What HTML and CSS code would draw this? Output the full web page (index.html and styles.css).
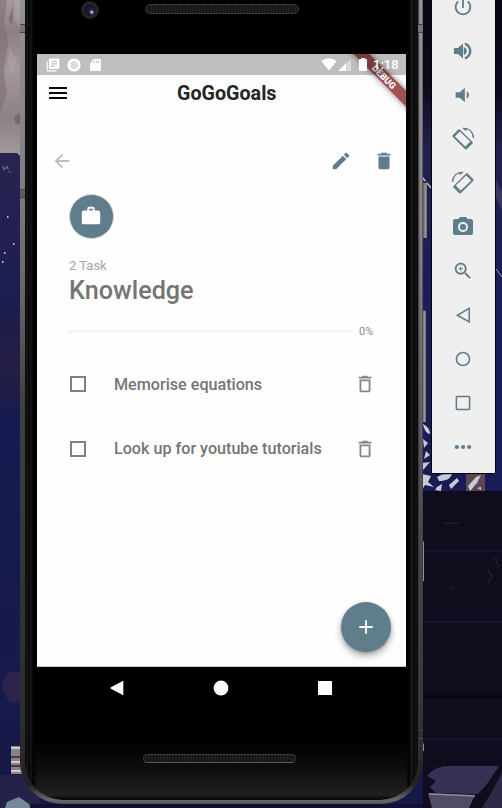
FILE: index.html
```html
<!DOCTYPE html>
<html lang="en">
<head>
<meta charset="utf-8">
<title>GoGoGoals</title>
<link rel="stylesheet" href="styles.css">
</head>
<body>
<svg class="wallpaper" viewBox="0 0 502 808" aria-hidden="true">
  <defs>
    <linearGradient id="stone" x1="0" y1="0" x2="0" y2="1"><stop offset="0" stop-color="#a59b9c"/><stop offset=".2" stop-color="#8d7f83"/><stop offset=".45" stop-color="#a3989a"/><stop offset=".75" stop-color="#8c8286"/><stop offset="1" stop-color="#a39a9b"/></linearGradient>
    <linearGradient id="night" x1="0" y1="0" x2="0" y2="1"><stop offset="0" stop-color="#292451"/><stop offset=".25" stop-color="#1b1d50"/><stop offset=".36" stop-color="#231e43"/><stop offset=".45" stop-color="#161a50"/><stop offset="1" stop-color="#18194b"/></linearGradient>
    <linearGradient id="sky" x1="0" y1="0" x2="0" y2="1"><stop offset="0" stop-color="#080613"/><stop offset=".18" stop-color="#0c0a1e"/><stop offset=".3" stop-color="#22204e"/><stop offset=".6" stop-color="#1b1d5a"/><stop offset="1" stop-color="#181b55"/></linearGradient>
  </defs>
  <rect width="502" height="808" fill="#161848"/>
  <rect width="40" height="156" fill="url(#stone)"/>
  <path d="M0 0h7l-3 22 4 20-4 30 3 22-7 20z" fill="#806e75" opacity=".6"/>
  <path d="M14 0h6v28l-5-8zM9 48l8 12-4 14-5-10z" fill="#b5adab" opacity=".4"/>
  <path d="M20 113l-6 4 1 6 5 2zM13 5l-4 14 3 7z" fill="#625b62" opacity=".6"/>
  <path d="M0 153h17l3 3v594H0z" fill="url(#night)"/>
  <path d="M2 166l4 2-2 3zM7 165l2 5-3-2zM9 171l3 2-4-1z" fill="#6e6990"/>
  <path d="M7 216h1.500v2H7zM13 243h1.500v2H13zM4 252h1.500v2H4zM2 261h1.500v2H2z" fill="#b8b6c9"/>
  <path d="M20 672h-10q-7 5-8 13 2 13 9 17l9 1z" fill="#352a4e" opacity=".7"/>
  <path d="M0 775h40v33H0z" fill="#242248"/>
  <path d="M11 746h12v28H11z" fill="#8b8189"/>
  <path d="M11 748h12M11 762h12M11 771h12" stroke="#d4c9ca" stroke-width="2"/>
  <path d="M11 757h12M11 766h12" stroke="#49394c" stroke-width="2"/>
  <path d="M5 808l2-6 12-5 10 7 2 4z" fill="#75899a"/>
  <path d="M30 804h395v4H30z" fill="#111033"/>
  <path d="M422 0h80v492h-80z" fill="url(#sky)"/>
  <path d="M422 177l9 11" stroke="#bbb9c4" stroke-width="1.500"/>
  <path d="M496 180l6 12v18l-6-12z" fill="#3b365d"/>
  <path d="M496 269l6 8" stroke="#9b99ae"/>
  <path d="M466 474h19v17h-19z" fill="#5d4653"/>
  <g fill="#c9cbd3"><path d="M423 424c6 3 7 7 7 10-3 0-6-4-7-10zM423 439l5 4-4 5zM426 451l4 4-6 4zM422 463l8-1-7 8zM422 474l9 2-3 6 6 5-9-2-3 5zM437 477c6-4 12-2 15-3-2 5-6 7-13 7zM449 485l8-7 2 3-8 8zM468 486l8-9 5-2-4 8-7 8zM437 487l5-3-1 7-6-1zM477 488l4-1v3z"/></g>
  <path d="M423 491h79v317H423z" fill="#100c1d"/>
  <path d="M423 512h79M423 551h79M423 622h79M423 739h79" stroke="#17132a" stroke-width="1.500"/>
  <path d="M423 697h79" stroke="#08060e" stroke-width="3"/>
  <path d="M443 523h16" stroke="#29233a"/>
  <path d="M488 570l4 7-4 6M495 558l4 9M450 587l2 3" stroke="#1f1d20" stroke-width="2" fill="none"/>
  <path d="M427 776q8-10 22-10h50l-12 18-9 10-42-1-6-6 6-6z" fill="#373154"/>
  <path d="M491 793l11-20v35h-20z" fill="#2d2947"/>
  <path d="M428 793l47 2-6 13h-37z" fill="#514b66"/>
  <path d="M429 794l46 2" stroke="#908996" stroke-width="1.500"/>
</svg>

<div class="stage">
  <div class="phone">
    <i class="side-key power"></i><i class="side-key volume"></i><i class="side-key low"></i><i class="side-key tip"></i>
    <i class="band band-a"></i><i class="band band-b"></i><i class="band band-c"></i>
    <div class="body">
      <div class="forehead"><span class="camera"></span><span class="speaker"></span></div>
      <div class="screen">
        <div class="banner-clip"><div class="banner">DEBUG</div></div>
        <div class="status">
          <svg class="st news" viewBox="0 0 24 24"><path d="M1 6v15c0 1 1 2 2 2h15v-2H3V6zM7 1h14c1 0 2 1 2 2v14c0 1-1 2-2 2H7c-1 0-2-1-2-2V3c0-1 1-2 2-2zm2 4v2h10V5zm0 4v2h10V9zm0 4v2h6v-2z" fill-rule="evenodd"/></svg>
          <svg class="st ring" viewBox="0 0 14 14"><circle cx="7" cy="7" r="6.600"/><circle cx="7" cy="7" r="3.900" fill="#dcdcdc"/></svg>
          <svg class="st sd" viewBox="0 0 24 24"><path d="M20 1H9L2 9v12c0 1.100.9 2 2 2h16c1.100 0 2-.9 2-2V3c0-1.100-.9-2-2-2zM11 8H9V4h2zm4 0h-2V4h2zm4 0h-2V4h2z"/></svg>
          <svg class="st wifi" viewBox="0 0 16 13"><path d="M8 12.500L.2 3Q8-2.600 15.800 3z"/></svg>
          <svg class="st cell" viewBox="0 0 13 12"><path d="M13 0v12H0z" fill="#dadada"/><path d="M8 4.600V12H0z"/></svg>
          <svg class="st batt" viewBox="0 0 8 13"><path d="M2 1V0h4v1h1.200q.8 0 .8.800v10.400q0 .8-.8.800H.8q-.8 0-.8-.8V1.800Q0 1 .8 1z"/></svg>
          <span class="clock">1:18</span>
        </div>
        <header class="appbar">
          <span class="menu"><i></i><i></i><i></i></span>
          <h1>GoGoGoals</h1>
        </header>
        <div class="actions">
          <svg class="back" viewBox="0 0 24 24"><path d="M20 11H7.830l5.590-5.590L12 4l-8 8 8 8 1.410-1.410L7.830 13H20v-2z"/></svg>
          <svg class="edit" viewBox="0 0 24 24"><path d="M3 17.250V21h3.750L17.810 9.940l-3.750-3.750L3 17.250zM20.710 7.040c.39-.39.39-1.020 0-1.410l-2.340-2.340c-.39-.39-1.020-.39-1.410 0l-1.830 1.830 3.750 3.750 1.830-1.830z"/></svg>
          <svg class="del" viewBox="0 0 24 24"><path d="M6 19c0 1.100.9 2 2 2h8c1.100 0 2-.9 2-2V7H6v12zM19 4h-3.500l-1-1h-5l-1 1H5v2h14V4z"/></svg>
        </div>
        <main class="content">
          <div class="avatar"><svg viewBox="0 0 24 24"><path d="M20 6h-4V4c0-1.110-.89-2-2-2h-4c-1.110 0-2 .89-2 2v2H4c-1.110 0-1.990.89-1.990 2L2 19c0 1.110.89 2 2 2h16c1.110 0 2-.89 2-2V8c0-1.110-.89-2-2-2zm-6 0h-4V4h4v2z"/></svg></div>
          <div class="count">2 Task</div>
          <h2>Knowledge</h2>
          <div class="progress"><span class="track"></span><span class="pct">0%</span></div>
          <ul>
            <li><span class="box"></span><span class="task">Memorise equations</span><svg viewBox="0 0 24 24"><path d="M6 19c0 1.100.9 2 2 2h8c1.100 0 2-.9 2-2V7H6v12zM8 9h8v10H8V9zm7.500-5l-1-1h-5l-1 1H5v2h14V4z"/></svg></li>
            <li><span class="box"></span><span class="task">Look up for youtube tutorials</span><svg viewBox="0 0 24 24"><path d="M6 19c0 1.100.9 2 2 2h8c1.100 0 2-.9 2-2V7H6v12zM8 9h8v10H8V9zm7.500-5l-1-1h-5l-1 1H5v2h14V4z"/></svg></li>
          </ul>
        </main>
        <div class="fab"><svg viewBox="0 0 14 14"><path d="M7 .3v13.400M.3 7h13.400"/></svg></div>
      </div>
      <div class="navbar">
        <svg viewBox="0 0 16 16"><path d="M14.300 1.200v13.600q0 .6-.6.300L1.500 8.400q-.5-.4 0-.8L13.700.9q.6-.3.6.3z"/></svg>
        <svg viewBox="0 0 16 16"><circle cx="8" cy="8" r="7.400"/></svg>
        <svg viewBox="0 0 16 16"><rect x="1" y="1" width="14" height="14" rx=".6"/></svg>
      </div>
      <div class="chin"><span class="speaker"></span></div>
    </div>
  </div>

  <aside class="tools">
    <svg viewBox="0 0 24 24"><path d="M13 3h-2v10h2V3zm4.830 2.170l-1.420 1.420C17.990 7.860 19 9.810 19 12c0 3.870-3.130 7-7 7s-7-3.130-7-7c0-2.190 1.010-4.140 2.580-5.420L6.170 5.170C4.230 6.820 3 9.260 3 12c0 4.970 4.030 9 9 9s9-4.030 9-9c0-2.740-1.230-5.180-3.170-6.830z"/></svg>
    <svg viewBox="0 0 24 24"><path d="M2 8.800v6.400h4.500l5.500 5V3.800l-5.500 5H2zm10.800 3.200V7.500c2 .7 3.400 2.400 3.400 4.500s-1.400 3.800-3.400 4.500zM14 2.700v2.700c2.890.86 4.500 3.540 4.500 6.600s-1.610 5.740-4.500 6.600v2.700c4.010-.91 7.200-4.900 7.200-9.300S18.010 3.610 14 2.700z"/></svg>
    <svg viewBox="0 0 24 24"><path d="M18.500 12c0-1.770-1.020-3.290-2.500-4.030v8.050c1.480-.73 2.500-2.250 2.500-4.020zM4 9v6h4.500l5.500 5V4L8.500 9H4z"/></svg>
    <svg class="rot" viewBox="0 0 25 25"><g id="rot"><path fill-rule="evenodd" d="M7.700 2.500q.8-.8 1.600 0L22.400 15.500q.8.800 0 1.600l-6 6q-.8.800-1.600 0L1.700 10.100q-.8-.8 0-1.600zM9.200 4.600L4 9.800 14.900 20.400l5.200-5.200z"/><path d="M12.500 1.500C19 1 22.800 5.400 23.500 11.500" fill="none" stroke="#607d8b" stroke-width="1.500"/><path d="M12 .8l5.500 1-2.200 2.300z"/></g></svg>
    <svg class="rot flip" viewBox="0 0 25 25"><use href="#rot"/></svg>
    <svg class="cam" viewBox="0 0 24 24"><path fill-rule="evenodd" d="M9 2L7.170 4H4c-1.100 0-2 .9-2 2v12c0 1.100.9 2 2 2h16c1.100 0 2-.9 2-2V6c0-1.100-.9-2-2-2h-3.170L15 2H9zm3 15c-2.760 0-5-2.240-5-5s2.240-5 5-5 5 2.240 5 5-2.240 5-5 5z"/><circle cx="12" cy="12" r="3.100"/></svg>
    <svg viewBox="0 0 24 24"><path d="M15.500 14h-.79l-.28-.27C15.410 12.590 16 11.110 16 9.500 16 5.910 13.090 3 9.500 3S3 5.910 3 9.500 5.910 16 9.500 16c1.610 0 3.090-.59 4.230-1.570l.27.28v.79l5 4.990L20.490 19l-4.990-5zm-6 0C7.010 14 5 11.990 5 9.500S7.010 5 9.500 5 14 7.010 14 9.500 11.990 14 9.500 14zm.5-7H9v2H7v1h2v2h1v-2h2V9h-2V7z"/></svg>
    <svg class="line" viewBox="0 0 20 20"><path d="M15.700 4v12.400L4.800 10.200z"/></svg>
    <svg class="line" viewBox="0 0 20 20"><circle cx="10" cy="10" r="6"/></svg>
    <svg class="line" viewBox="0 0 20 20"><rect x="4" y="4" width="12" height="12" rx=".8"/></svg>
    <svg viewBox="0 0 20 20"><circle cx="4.400" cy="10" r="1.900"/><circle cx="10" cy="10" r="1.900"/><circle cx="15.600" cy="10" r="1.900"/></svg>
  </aside>
</div>
</body>
</html>
```
FILE: styles.css
```css
* { box-sizing: border-box; }
body {
  margin: 0;
  width: 502px;
  height: 808px;
  overflow: hidden;
  position: relative;
  font-family: Roboto, "Liberation Sans", sans-serif;
}
svg { display: block; flex: none; }
h1, h2, ul { margin: 0; padding: 0; }
.wallpaper { position: absolute; inset: 0; width: 502px; height: 808px; }
.stage {
  position: relative;
  display: flex;
  align-items: flex-start;
  gap: 8px;
  padding-left: 20px;
}

/* Device frame */
.phone {
  position: relative;
  width: 403px;
  height: 804px;
  padding: 0 5px 4px;
  border-radius: 0 0 42px 42px;
  background: linear-gradient(#929193 0, #858386 150px, #6a686c 280px, #414143 400px, #353537 560px, #2c2c2c 740px, #222 785px, #68686b 800px, #555 804px);
}
.phone::after {
  content: "";
  position: absolute;
  top: 0;
  right: 0;
  width: 5px;
  height: 760px;
  background: linear-gradient(90deg, #38383a 0, transparent 2px, transparent 4px, #333), linear-gradient(#98959a 0, #858086 240px, #67646a 400px, #49494d 540px, #38383a 700px, #29292b);
}
.body {
  position: relative;
  z-index: 1;
  width: 393px;
  height: 800px;
  padding: 0 12px;
  border-radius: 0 0 38px 38px;
  background: linear-gradient(90deg, #080808 0, #171717 2px, #070707 4px, #171717 6px, #020202 8px, transparent 12px, transparent 381px, #020202 384px, #1b1b1b 387px, #080808 389px, #151515 391px, #050505), linear-gradient(#000 740px, #0c0c0c 766px, #202020 795px, #070707 799px);
}
.side-key {
  position: absolute;
  right: -4px;
  width: 4px;
  background: linear-gradient(90deg, #555, #999 60%, #666);
  border-top: 2px solid #333;
}
.power { top: 181px; height: 57px; }
.volume { top: 309px; height: 113px; right: -3px; }
.low { top: 540px; height: 41px; right: -1px; width: 1px; }
.tip { top: 742px; height: 9px; right: -1px; width: 1px; }
.band {
  position: absolute;
  z-index: 2;
  height: 9px;
  left: 0;
  right: 0;
  border: solid #454346;
  border-width: 1px 0;
  background: linear-gradient(90deg, #77757a 5px, transparent 5px, transparent 398px, #77757a 398px);
  clip-path: polygon(0 0, 5px 0, 5px 100%, 398px 100%, 398px 0, 100% 0, 100% 100%, 0 100%);
}
.band-a { top: 24px; }
.band-b { top: 189px; right: 398px; background: #5e5d60; }
.band-c { top: 730px; left: 398px; background: #303033; clip-path: none; }
.forehead {
  position: relative;
  height: 54px;
  padding: 1px 0 0 44px;
  display: flex;
  align-items: flex-start;
}
.camera {
  width: 18px;
  height: 18px;
  border-radius: 50%;
  background: radial-gradient(circle at 60% 62%, #a8a9c8 0 1px, #40406b 2px, transparent 3px), radial-gradient(circle, #1b1a4c 0 3px, #11111b 5px, #272727 6px, #202020 9px);
}
.speaker {
  width: 153px;
  height: 9px;
  border: 1px solid #3a3a3a;
  border-radius: 5px;
  background: repeating-linear-gradient(90deg, #111 0 1px, #202020 1px 3px);
}
.forehead .speaker { width: 154px; height: 10px; margin: 3px 0 0 46px; }

/* App screen */
.screen {
  position: relative;
  width: 369px;
  height: 613px;
  background: #fefefe;
  border-bottom: 1px solid #c6c9c9;
}
.banner-clip { position: absolute; inset: 0; overflow: hidden; }
.banner {
  position: absolute;
  left: 297px;
  top: 16.500px;
  width: 100px;
  height: 10.500px;
  padding-left: 1px;
  transform: rotate(45deg);
  background: #a05153;
  box-shadow: 0 0 6px rgba(0, 0, 0, .5);
  color: #fff;
  font-size: 9.200px;
  line-height: 11px;
  font-weight: 900;
  text-align: center;
}
.status {
  position: relative;
  height: 21px;
  padding: 0 8px 0 9px;
  display: flex;
  align-items: center;
  background: rgba(0, 0, 0, .25);
  color: #fff;
}
.st { fill: #fff; }
.news { width: 14px; height: 14px; }
.ring { width: 14px; height: 14px; margin-left: 7px; }
.sd { width: 13px; height: 14px; margin-left: 8px; }
.wifi { width: 16px; height: 13px; margin-left: auto; }
.cell { width: 13px; height: 12px; margin-left: 1px; }
.batt { width: 8px; height: 13px; margin-left: 8px; }
.clock { width: 25px; margin-left: 6px; font-size: 13px; line-height: 21px; font-weight: 500; white-space: nowrap; }
.appbar {
  height: 36px;
  padding-left: 12px;
  display: flex;
  align-items: center;
}
.menu { display: grid; gap: 3px; width: 18px; }
.menu i { height: 2px; background: #080808; }
h1 { margin-left: 110px; padding-top: 2px; font-size: 19.700px; line-height: 24px; font-weight: 700; color: #252525; }
.actions {
  margin-top: 39px;
  height: 22px;
  padding: 0 11px 0 14px;
  display: flex;
  align-items: center;
}
.actions svg { width: 22px; height: 22px; fill: #607d8b; }
.actions .back { fill: #bdbdbd; }
.edit { margin-left: auto; }
.actions .del { margin-left: 21px; }
.content { padding: 22px 32px 0; }
.avatar {
  width: 45px;
  height: 45px;
  border: 1px solid #d3d8da;
  border-radius: 50%;
  background: #607d8b;
  display: grid;
  place-items: center;
}
.avatar svg { width: 22px; height: 22px; margin: -1px 1px 0 0; fill: #fff; }
.count { margin-top: 19px; font-size: 13px; line-height: 16px; color: #a5a5a5; }
h2 { margin-top: 1px; font-size: 25.200px; line-height: 32px; font-weight: 500; color: #757575; }
.progress { margin-top: 17px; height: 15px; display: flex; align-items: center; gap: 7px; }
.track { width: 283px; height: 3px; background: #f4f4f4; }
.pct { font-size: 11px; line-height: 15px; color: #8b8b8b; }
ul { margin-top: 13px; list-style: none; }
li { height: 64.500px; display: flex; align-items: center; }
.box { width: 16px; height: 16px; margin-left: 1px; border: 2px solid #848080; }
.task { margin-left: 28px; padding-top: 1px; flex: 1; font-size: 16.150px; line-height: 22px; font-weight: 500; color: #757575; white-space: nowrap; }
li svg { width: 22px; height: 22px; margin-right: -1.500px; fill: #8b8686; }
.fab {
  position: absolute;
  left: 304px;
  top: 548px;
  width: 50px;
  height: 50px;
  border-radius: 50%;
  background: #607d8b;
  box-shadow: 0 4px 7px rgba(0, 0, 0, .32), 0 1px 3px rgba(0, 0, 0, .2);
  display: grid;
  place-items: center;
}
.fab svg { width: 14px; height: 14px; stroke: #fff; stroke-width: 1.800; }
.navbar { height: 42px; display: flex; align-items: center; justify-content: space-between; padding: 0 73px 0 72px; }
.navbar svg { width: 16px; height: 16px; fill: #fff; }
.chin { padding: 45px 0 0 106px; }
.chin .speaker { display: block; border-bottom-color: #5a5a60; }

/* Emulator controls */
.tools {
  width: 65px;
  height: 474px;
  border: 1px solid #050509;
  border-top: 0;
  background: #efefef;
  display: flex;
  flex-direction: column;
  align-items: center;
  gap: 22px;
  padding-right: 1px;
  overflow: hidden;
}
.tools svg { width: 22px; height: 22px; fill: #607d8b; }
.tools svg:first-child { margin-top: -4px; }
.tools .rot { width: 24px; height: 24px; margin: -1px 0; }
.tools .flip { transform: scaleX(-1); }
.tools .cam { width: 24px; height: 24px; margin: -1px 0; }
.tools .line { fill: none; stroke: #607d8b; stroke-width: 1.400; }
```
